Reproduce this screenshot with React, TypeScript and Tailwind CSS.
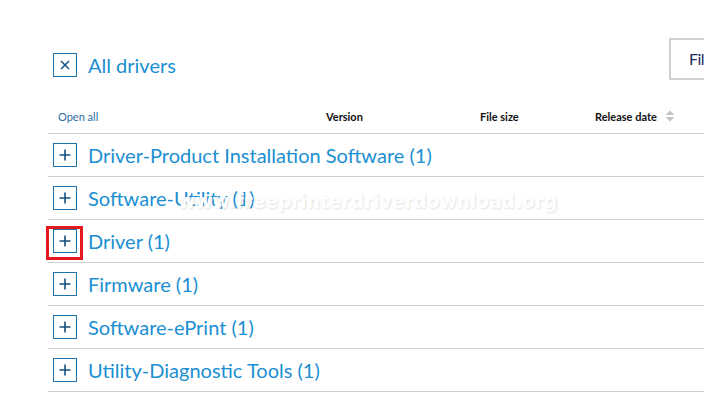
import React from "react";

const CATEGORIES = [
  "Driver-Product Installation Software (1)",
  "Software-Utility (1)",
  "Driver (1)",
  "Firmware (1)",
  "Software-ePrint (1)",
  "Utility-Diagnostic Tools (1)",
];

function PlusBox() {
  return (
    <span className="flex h-[24px] w-[24px] shrink-0 items-center justify-center border-[1.5px] border-[#1f73ad]">
      <svg width="12" height="12" viewBox="0 0 12 12">
        <path d="M6 0.5v11M0.5 6h11" stroke="#15507f" strokeWidth="1.6" />
      </svg>
    </span>
  );
}

export default function App() {
  return (
    <div
      className="relative h-[399px] w-[704px] overflow-hidden bg-white"
      style={{ fontFamily: "Lato, 'Open Sans', sans-serif" }}
    >
      <div className="flex h-[80px]">
        <div className="ml-[53px] mt-[53px] flex h-[24px] items-center gap-[11px]">
          <span className="flex h-[24px] w-[24px] items-center justify-center border-[1.5px] border-[#1f73ad]">
            <svg width="10" height="10" viewBox="0 0 10 10">
              <path d="M1 1l8 8M9 1l-8 8" stroke="#15507f" strokeWidth="1.5" />
            </svg>
          </span>
          <span className="text-[20px] leading-none text-[#1b8fd2]">All drivers</span>
        </div>
        <div className="ml-auto mt-[38px] flex h-[42px] w-[35px] items-center overflow-hidden whitespace-nowrap border-2 border-r-0 border-[#cfcfcf] pl-[18px] text-[16px] tracking-[-0.5px] text-[#1a2a5a]">
          Filter
        </div>
      </div>

      <div className="ml-[48px] grid h-[54px] grid-cols-[278px_154px_115px_1fr] items-end border-b border-[#cfcfcf] pb-[11px] text-[11px] leading-none">
        <span className="pl-[10px] text-[#2d6ea3]">Open all</span>
        <span className="font-bold text-[#111]">Version</span>
        <span className="font-bold text-[#111]">File size</span>
        <span className="flex items-center gap-[8px] font-bold text-[#111]">
          Release date
          <svg width="10" height="12" viewBox="0 0 10 12">
            <path d="M5 0.5L9.5 5H0.5z M5 11.5L9.5 7H0.5z" fill="#c4c4c4" />
          </svg>
        </span>
      </div>

      {CATEGORIES.map((c) => (
        <div
          key={c}
          className="ml-[48px] flex h-[43px] items-center gap-[11px] border-b border-[#cfcfcf] pl-[5px]"
        >
          <PlusBox />
          <span className="text-[20px] leading-none text-[#1b8fd2]">{c}</span>
        </div>
      ))}

      <div className="pointer-events-none absolute left-[46px] top-[226px] h-[34px] w-[37px] border-[3px] border-[#e3191f]" />

      <div
        className="pointer-events-none absolute left-[178px] top-[188px] text-[18.6px] font-bold text-white"
        style={{
          fontFamily: "'DejaVu Sans', Verdana, sans-serif",
          textShadow: "1px 1px 2px rgba(0,0,0,0.12)",
        }}
      >
        www.freeprinterdriverdownload.org
      </div>
    </div>
  );
}
